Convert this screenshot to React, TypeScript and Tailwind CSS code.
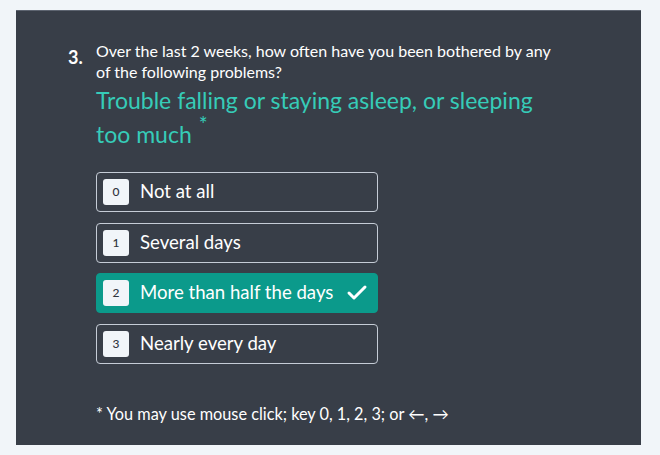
import { Check } from 'lucide-react'

const options = [
  { key: '0', label: 'Not at all' },
  { key: '1', label: 'Several days' },
  { key: '2', label: 'More than half the days' },
  { key: '3', label: 'Nearly every day' },
]

const selected = '2'

function Option({ k, label, active }: { k: string; label: string; active: boolean }) {
  return (
    <div
      className={
        active
          ? 'flex h-[40px] w-[282px] items-center rounded-[4px] border border-[#0b9a8b] bg-[#0b9a8b] pl-[6px] text-white'
          : 'flex h-[40px] w-[282px] items-center rounded-[4px] border border-[#c5ccd6] pl-[6px] text-white'
      }
    >
      <span className="flex h-[26px] w-[26px] shrink-0 items-center justify-center rounded-[3px] bg-[#f1f5f9] text-[12px] font-medium text-[#2f343c]">
        {k}
      </span>
      <span className="ml-[11px] text-[18.6px]">{label}</span>
      {active && <Check className="ml-[12px] size-[24px]" strokeWidth={3} />}
    </div>
  )
}

export default function App() {
  return (
    <div className="h-[455px] w-[660px] bg-[#f1f5f9] pt-[10px] pl-[16px] font-['Lato',sans-serif]">
      <div className="h-[435px] w-[625px] border-t border-[#5d6470] bg-[#383e48] pt-[29px] pl-[52px]">
        <div className="flex">
          <span className="mt-[8px] w-[28px] shrink-0 text-[18px] font-bold leading-[18px] text-white">3.</span>
          <div>
            <p className="text-[16px] leading-[21px] text-white">
              Over the last 2 weeks, how often have you been bothered by any
              <br />
              of the following problems?
            </p>
            <h2 className="mt-[1px] w-[460px] text-[23px] leading-[34px] text-[#36ccb8]">
              Trouble falling or staying asleep, or sleeping too much
              <span className="relative -top-[11px] ml-[7px] text-[21px] leading-[0]">*</span>
            </h2>

            <div className="mt-[21px] flex flex-col gap-[10.5px]">
              {options.map(o => (
                <Option key={o.key} k={o.key} label={o.label} active={o.key === selected} />
              ))}
            </div>

            <p className="mt-[38px] text-[16.3px] text-white">
              * You may use mouse click; key 0, 1, 2, 3; or ←, →
            </p>
          </div>
        </div>
      </div>
    </div>
  )
}
